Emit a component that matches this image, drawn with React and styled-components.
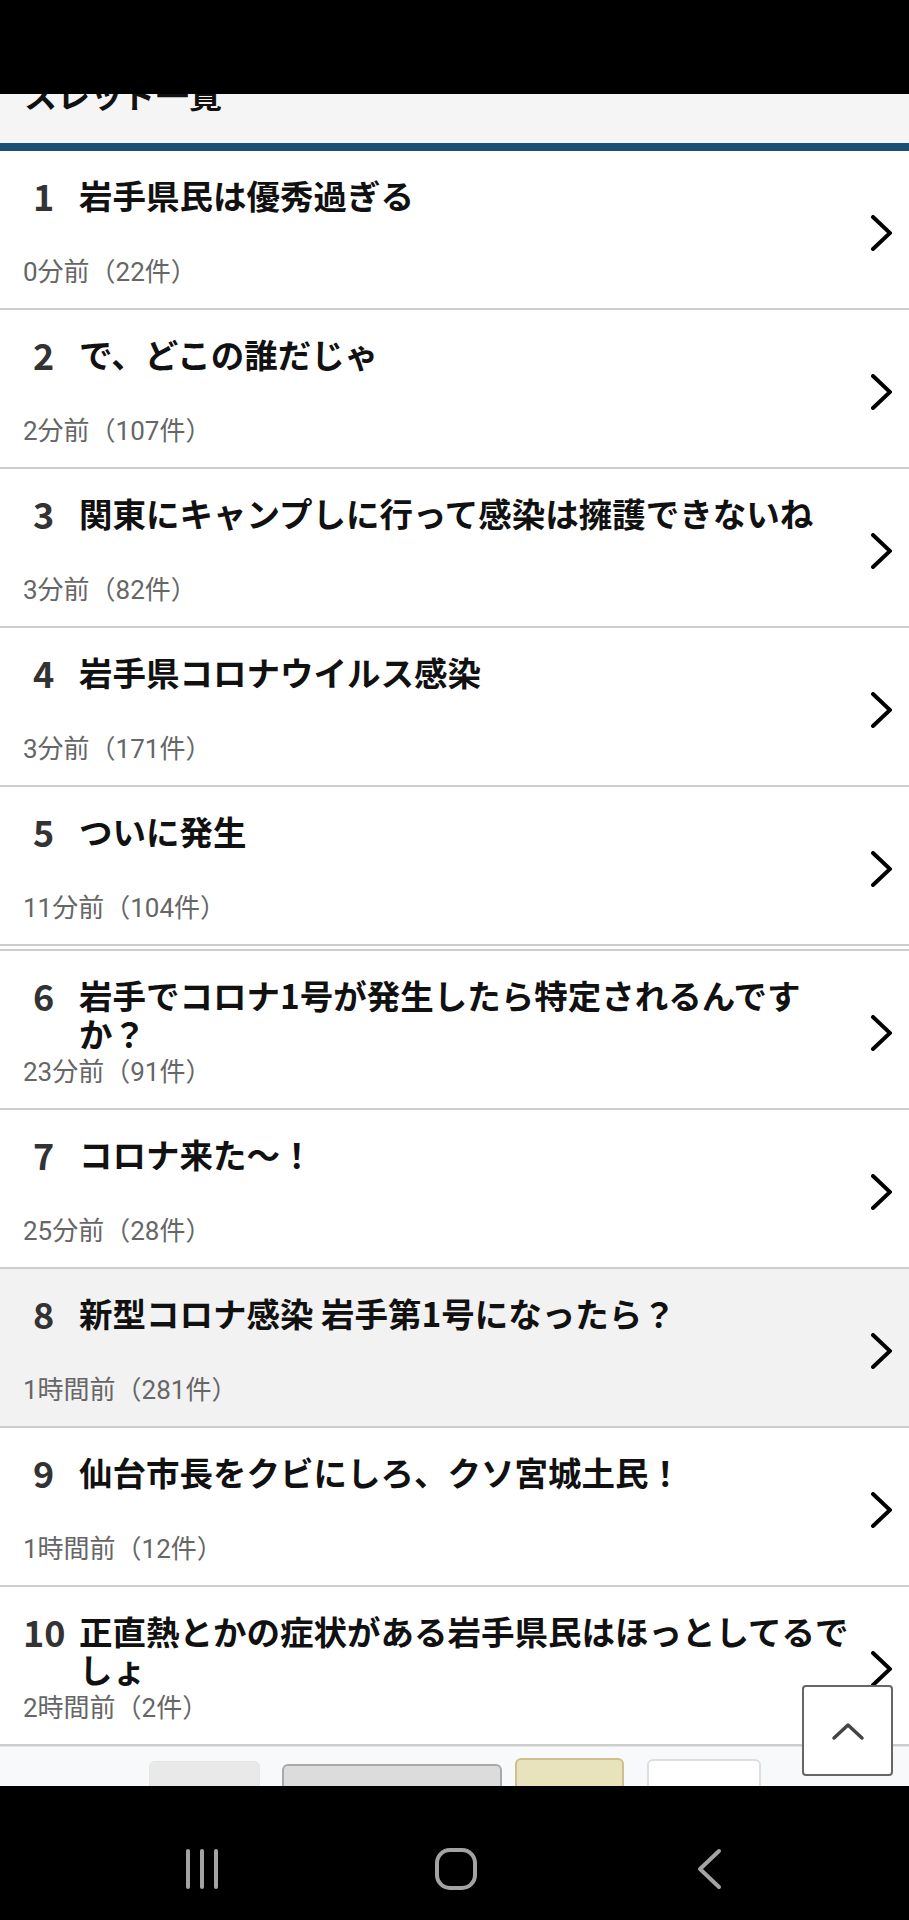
import React from "react";
import styled, { createGlobalStyle } from "styled-components";

const GlobalStyle = createGlobalStyle`
  html, body {
    margin: 0;
    padding: 0;
    background: #000;
  }
  body {
    font-family: "Noto Sans CJK JP", "Noto Sans", sans-serif;
  }
`;

const threads = [
  { no: 1, title: "岩手県民は優秀過ぎる", meta: "0分前（22件）" },
  { no: 2, title: "で、どこの誰だじゃ", meta: "2分前（107件）" },
  { no: 3, title: "関東にキャンプしに行って感染は擁護できないね", meta: "3分前（82件）" },
  { no: 4, title: "岩手県コロナウイルス感染", meta: "3分前（171件）" },
  { no: 5, title: "ついに発生", meta: "11分前（104件）", split: true },
  { no: 6, title: "岩手でコロナ1号が発生したら特定されるんですか？", meta: "23分前（91件）" },
  { no: 7, title: "コロナ来た〜！", meta: "25分前（28件）" },
  { no: 8, title: "新型コロナ感染 岩手第1号になったら？", meta: "1時間前（281件）", visited: true },
  { no: 9, title: "仙台市長をクビにしろ、クソ宮城土民！", meta: "1時間前（12件）" },
  { no: 10, title: "正直熱とかの症状がある岩手県民はほっとしてるでしょ", meta: "2時間前（2件）" },
];

const tools = [
  { w: 111, top: 14, gap: 0, bg: "#e9e9e9", border: "1px solid #e5e5e5" },
  { w: 220, top: 17, gap: 22, bg: "#dcdcdc", border: "2px solid #a9a9a9" },
  { w: 109, top: 11, gap: 13, bg: "#e8e2bd", border: "2px solid #cdc08c" },
  { w: 114, top: 12, gap: 23, bg: "#fff", border: "2px solid #dedede" },
];

const Screen = styled.div`
  position: relative;
  width: 909px;
  height: 1920px;
  overflow: hidden;
  display: flex;
  flex-direction: column;
  background: #fff;
`;

const StatusBar = styled.div`
  height: 94px;
  flex: none;
  background: #000;
`;

const Header = styled.div`
  height: 49px;
  flex: none;
  overflow: hidden;
  background: #f5f5f5;
  border-bottom: 8px solid #1c4f76;
  padding-left: 24px;
`;

const HeaderTitle = styled.h2`
  margin: -16px 0 0;
  font-size: 33px;
  line-height: 33px;
  font-weight: 700;
  color: #111;
`;

const ThreadList = styled.ul`
  list-style: none;
  margin: 0;
  padding: 0;
  flex: none;
`;

const Row = styled.li`
  display: grid;
  grid-template-columns: 41px minmax(0, 1fr) 21px;
  grid-template-rows: 79px 34px;
  column-gap: 15px;
  align-items: start;
  height: 159px;
  box-sizing: border-box;
  padding: 25px 17px 19px 23px;
  border-bottom: 2px solid #cdcdcd;
  background: ${(p) => (p.$visited ? "#f2f2f2" : "#fff")};
`;

const Num = styled.span`
  font-size: 36px;
  line-height: 38px;
  font-weight: 700;
  color: #333;
  text-align: center;
  white-space: nowrap;
`;

const Title = styled.span`
  font-size: 33.5px;
  line-height: 38px;
  font-weight: 700;
  color: #111;
`;

const Meta = styled.span`
  grid-column: 1 / 3;
  grid-row: 2;
  font-family: "Roboto", "Noto Sans CJK JP", sans-serif;
  font-size: 26px;
  line-height: 34px;
  color: #666;
  white-space: nowrap;
`;

const Chevron = styled.svg`
  grid-column: 3;
  grid-row: 1 / 3;
  align-self: center;
  width: 21px;
  height: 36px;
`;

const Separator = styled.li`
  height: 2px;
  margin-top: 3px;
  background: #cdcdcd;
`;

const Toolbar = styled.div`
  flex: 1;
  overflow: hidden;
  display: flex;
  align-items: flex-start;
  padding-left: 149px;
  background: #f8f9fa;
  border-top: 1px solid #e2e2e2;
`;

const ToolButton = styled.div`
  flex: none;
  width: ${(p) => p.$w}px;
  height: 70px;
  margin-top: ${(p) => p.$top}px;
  margin-left: ${(p) => p.$gap}px;
  box-sizing: border-box;
  border-radius: 6px;
  background: ${(p) => p.$bg};
  border: ${(p) => p.$border};
`;

const NavBar = styled.div`
  height: 134px;
  flex: none;
  background: #000;
  display: grid;
  grid-template-columns: repeat(3, 254px);
  padding-left: 75px;
  padding-top: 62px;
  box-sizing: border-box;
  align-items: start;
  justify-items: center;
`;

const NavIcon = styled.svg`
  width: 44px;
  height: 42px;
  stroke: #a3a3a3;
  fill: none;
  stroke-width: 4;
  stroke-linecap: round;
  stroke-linejoin: round;
`;

const ScrollTop = styled.button`
  position: absolute;
  right: 16px;
  bottom: 144px;
  width: 91px;
  height: 91px;
  padding: 0;
  box-sizing: border-box;
  display: flex;
  align-items: center;
  justify-content: center;
  background: #fff;
  border: 2px solid #666;
  border-radius: 4px;
`;

function ThreadRow({ thread }) {
  return (
    <Row $visited={thread.visited}>
      <Num>{thread.no}</Num>
      <Title>{thread.title}</Title>
      <Meta>{thread.meta}</Meta>
      <Chevron viewBox="0 0 21 36">
        <polyline
          points="2,2 19,18 2,34"
          fill="none"
          stroke="#000"
          strokeWidth="4"
          strokeLinecap="round"
          strokeLinejoin="miter"
        />
      </Chevron>
    </Row>
  );
}

export default function App() {
  return (
    <Screen>
      <GlobalStyle />
      <StatusBar />
      <Header>
        <HeaderTitle>スレッド一覧</HeaderTitle>
      </Header>
      <ThreadList>
        {threads.map((t) => (
          <React.Fragment key={t.no}>
            <ThreadRow thread={t} />
            {t.split ? <Separator /> : null}
          </React.Fragment>
        ))}
      </ThreadList>
      <Toolbar>
        {tools.map((b, i) => (
          <ToolButton key={i} $w={b.w} $top={b.top} $gap={b.gap} $bg={b.bg} $border={b.border} />
        ))}
      </Toolbar>
      <NavBar>
        <NavIcon viewBox="0 0 44 42">
          <line x1="8" y1="3" x2="8" y2="39" />
          <line x1="22" y1="3" x2="22" y2="39" />
          <line x1="36" y1="3" x2="36" y2="39" />
        </NavIcon>
        <NavIcon viewBox="0 0 44 42">
          <rect x="3" y="2" width="38" height="38" rx="13" />
        </NavIcon>
        <NavIcon viewBox="0 0 44 42">
          <polyline points="31,3 12,21 31,39" />
        </NavIcon>
      </NavBar>
      <ScrollTop aria-label="ページの先頭へ">
        <svg width="34" height="20" viewBox="0 0 34 20">
          <polyline
            points="3,17 17,4 31,17"
            fill="none"
            stroke="#444"
            strokeWidth="3.5"
            strokeLinecap="round"
            strokeLinejoin="round"
          />
        </svg>
      </ScrollTop>
    </Screen>
  );
}
